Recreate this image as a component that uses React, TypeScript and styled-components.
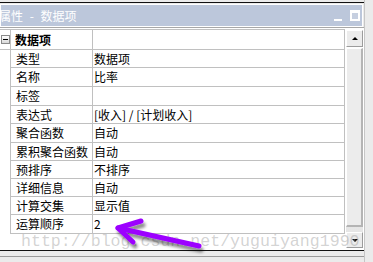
import * as React from 'react'
import styled, { createGlobalStyle } from 'styled-components'

const GlobalStyle = createGlobalStyle`
  html, body {
    margin: 0;
    padding: 0;
  }
  body {
    width: 373px;
    height: 262px;
    overflow: hidden;
    background: #ebebeb;
    font-family: "Noto Sans CJK SC", "Noto Sans", sans-serif;
  }
`

const Screen = styled.div`
  position: relative;
  width: 373px;
  height: 262px;
  display: flex;
  overflow: hidden;
  background: #ebebeb;
`
const Panel = styled.div`
  width: 364px;
  margin-top: 2px;
  border-top: 1px solid #111;
  display: flex;
  flex-direction: column;
`
const RightStrip = styled.div`
  width: 8px;
  border-left: 1px solid #c6c6c6;
  background: #ebebeb;
`
const TitleBar = styled.div`
  margin-top: 1px;
  width: 361px;
  height: 21px;
  border: 1px solid #fff;
  background: #bcc7db;
  display: flex;
  align-items: center;
  justify-content: space-between;
  color: #fff;
  font-size: 12px;
  overflow: hidden;
`
const TitleText = styled.span`
  text-indent: -2px;
  word-spacing: 4px;
  white-space: pre;
  line-height: 21px;
`
const TitleButtons = styled.div`
  display: flex;
  align-items: flex-end;
  gap: 8px;
  margin-right: 2px;
  height: 11px;
`
const MinButton = styled.div`
  width: 8px;
  height: 2px;
  background: #fff;
`
const MaxButton = styled.div`
  width: 6px;
  height: 6px;
  border: 2px solid #fff;
  border-top-width: 3px;
  background: #c6cfe0;
`
const Body = styled.div`
  display: flex;
  height: 222px;
  border-top: 1px solid #a8a8a8;
  background: #fff;
`
const Grid = styled.div`
  width: 345px;
  padding-top: 1px;
  display: flex;
  flex-direction: column;
  background: #fff;
`
const Row = styled.div<{ $h: number; $top?: boolean }>`
  display: grid;
  grid-template-columns: 11px 82px 1fr;
  height: ${(p) => p.$h}px;
  border-top: ${(p) => (p.$top ? '1px solid #c0c0c0' : 'none')};
  font-size: 12px;
  color: #000;
`
const Gutter = styled.div<{ $line?: boolean }>`
  border-right: 1px solid #c0c0c0;
  border-bottom: ${(p) => (p.$line ? '1px solid #c0c0c0' : 'none')};
  display: flex;
  align-items: center;
`
const Cell = styled.div<{ $bold?: boolean; $pad: number }>`
  border-right: 1px solid #c0c0c0;
  border-bottom: 1px solid #c0c0c0;
  display: flex;
  align-items: center;
  padding-left: ${(p) => p.$pad}px;
  font-weight: ${(p) => (p.$bold ? 700 : 400)};
  white-space: nowrap;
  overflow: hidden;
  line-height: 1;
`
const Toggle = styled.div`
  width: 7px;
  height: 7px;
  margin-left: 1px;
  border: 1px solid #8a8a8a;
  background: linear-gradient(#ffffff, #d8d8d8);
  display: flex;
  align-items: center;
  justify-content: center;
  &::after {
    content: '';
    width: 5px;
    height: 1px;
    background: #000;
  }
`
const ScrollBar = styled.div`
  width: 17px;
  padding: 2px 0 2px 1px;
  display: flex;
  flex-direction: column;
  background: #fff;
`
const ScrollButton = styled.div<{ $h: number }>`
  height: ${(p) => p.$h}px;
  box-sizing: border-box;
  border: 1px solid #fff;
  border-right-color: #9c9c9c;
  border-bottom-color: #9c9c9c;
  background: #ececec;
  display: flex;
  align-items: center;
  justify-content: center;
`
const Thumb = styled.div`
  flex: 1;
  margin-top: 1px;
  box-sizing: border-box;
  border: 1px solid #fff;
  border-right: 2px solid #b4b4b4;
  border-bottom: 2px solid #b4b4b4;
  background: #ececec;
`
const Track = styled.div`
  height: 5px;
  background-color: #fff;
  background-image: radial-gradient(#c8c8c8 0.6px, transparent 0.8px);
  background-size: 2px 2px;
`
const Arrow = styled.div<{ $down?: boolean }>`
  width: 0;
  height: 0;
  border-left: 3px solid transparent;
  border-right: 3px solid transparent;
  border-bottom: ${(p) => (p.$down ? 'none' : '3px solid #000')};
  border-top: ${(p) => (p.$down ? '3px solid #000' : 'none')};
`
const Footer = styled.div`
  height: 5px;
  border-top: 1px solid #111;
  border-bottom: 1px solid #9a9a9a;
  background: #ebebeb;
`
const Watermark = styled.div`
  position: absolute;
  left: 21px;
  top: 232px;
  font-family: "Liberation Mono", "Courier New", monospace;
  font-size: 16.6px;
  color: rgba(150, 150, 150, 0.42);
  white-space: pre;
  pointer-events: none;
`
const Overlay = styled.svg`
  position: absolute;
  left: 0;
  top: 0;
  pointer-events: none;
`

const rows: { name: string; value: React.ReactNode; h: number }[] = [
  { name: '类型', value: '数据项', h: 18 },
  { name: '名称', value: '比率', h: 19 },
  { name: '标签', value: '', h: 19 },
  { name: '表达式', value: '[收入] / [计划收入]', h: 18 },
  { name: '聚合函数', value: '自动', h: 19 },
  { name: '累积聚合函数', value: '自动', h: 18 },
  { name: '预排序', value: '不排序', h: 18 },
  { name: '详细信息', value: '自动', h: 18 },
  { name: '计算交集', value: '显示值', h: 18 },
  { name: '运算顺序', value: '2', h: 19 },
]

const App = () => {
  return (
    <Screen>
      <GlobalStyle />
      <Panel>
        <TitleBar>
          <TitleText>属性 - 数据项</TitleText>
          <TitleButtons>
            <MinButton />
            <MaxButton />
          </TitleButtons>
        </TitleBar>
        <Body>
          <Grid>
            <Row $h={20} $top>
              <Gutter $line>
                <Toggle />
              </Gutter>
              <Cell $bold $pad={4}>数据项</Cell>
              <Cell $pad={2} />
            </Row>
            {rows.map((r) => (
              <Row key={r.name} $h={r.h}>
                <Gutter />
                <Cell $pad={5}>{r.name}</Cell>
                <Cell $pad={1}>{r.value}</Cell>
              </Row>
            ))}
          </Grid>
          <ScrollBar>
            <ScrollButton $h={17}>
              <Arrow />
            </ScrollButton>
            <Thumb />
            <Track />
            <ScrollButton $h={16}>
              <Arrow $down />
            </ScrollButton>
          </ScrollBar>
        </Body>
        <Footer />
      </Panel>
      <RightStrip />
      <Watermark>http://blog.csdn.net/yuguiyang1990</Watermark>
      <Overlay width={373} height={262} viewBox="0 0 373 262">
        <defs>
          <filter id="shade" x="-20%" y="-40%" width="140%" height="180%">
            <feDropShadow dx="2" dy="4" stdDeviation="1.6" floodColor="#000" floodOpacity="0.45" />
          </filter>
        </defs>
        <g
          stroke="#9c00ff"
          strokeWidth={5}
          strokeLinecap="round"
          strokeLinejoin="round"
          fill="none"
          filter="url(#shade)"
        >
          <path d="M118 228 L199 246" />
          <path d="M141 221 L118 228 L133 242" />
        </g>
      </Overlay>
    </Screen>
  )
}

export default App
